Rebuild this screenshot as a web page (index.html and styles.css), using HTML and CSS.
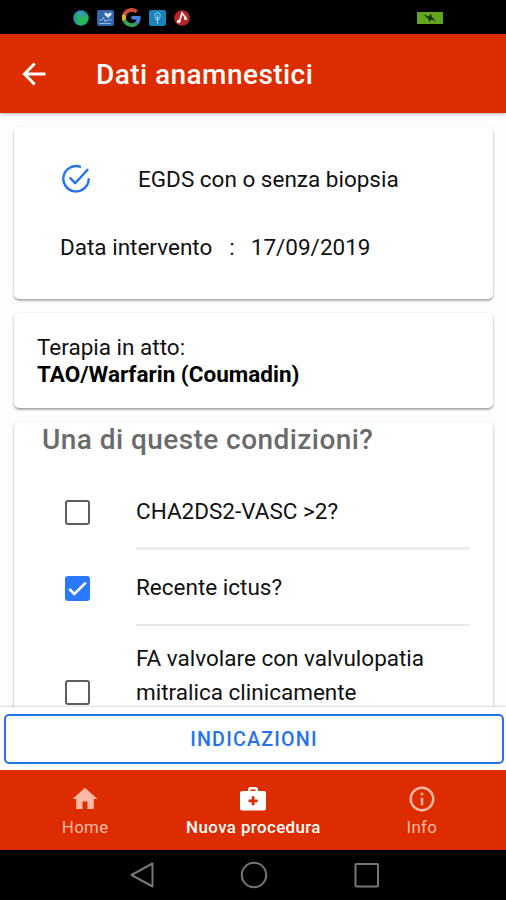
FILE: index.html
```html
<!DOCTYPE html>
<html lang="it">
<head>
<meta charset="utf-8">
<title>Dati anamnestici</title>
<link rel="stylesheet" href="styles.css">
</head>
<body>
<div class="screen">
  <div class="status">
    <div class="status-icons">
      <svg width="16" height="16" viewBox="0 0 16 16"><circle cx="8" cy="8" r="7.8" fill="#2593a5"/><path d="M1 4 5 5 9 8 14 4 15.5 8 13 13 8 15.5 3 13 5 9Z" fill="#23b955"/><path d="M5 1 10 2 12 5 9 8 5 5Z" fill="#399cae"/></svg>
      <svg width="17" height="16" viewBox="0 0 17 16"><rect width="17" height="16" rx="2" fill="#3267a9"/><path d="M11 8 7.5 4.7Q7 2.5 9 2.5L11 4 13 2.5Q15 2.5 14.5 4.7Z" fill="#dce8f5"/><path d="M2 10H5L6.500 7 8 12 10 10H15M2 13.500H14" fill="none" stroke="#8fb4dd" stroke-width="1"/></svg>
      <svg width="19" height="19" viewBox="0 0 48 48"><path fill="#d94a3d" d="M24 9.500c3.500 0 6.700 1.200 9.200 3.600l6.900-6.900C35.900 2.400 30.500 0 24 0 14.600 0 6.500 5.400 2.600 13.200l8 6.200C12.400 13.700 17.700 9.500 24 9.500z"/><path fill="#4a80dd" d="M47 24.500c0-1.600-.2-3.100-.4-4.500H24v9h12.900c-.6 3-2.200 5.500-4.700 7.200l7.700 6C44.400 38 47 31.800 47 24.500z"/><path fill="#e6b423" d="M10.500 28.600a14.500 14.500 0 0 1 0-9.200l-8-6.200a24 24 0 0 0 0 21.600z"/><path fill="#38a057" d="M24 48c6.500 0 11.900-2.100 15.900-5.800l-7.700-6c-2.200 1.500-4.900 2.300-8.200 2.300-6.300 0-11.600-4.200-13.500-9.900l-8 6.200C6.500 42.600 14.600 48 24 48z"/></svg>
      <svg width="17" height="16" viewBox="0 0 17 16"><rect width="17" height="16" rx="2" fill="#1b83b7"/><circle cx="8.500" cy="5.500" r="2.800" fill="none" stroke="#8bd0ec"/><path d="M8.500 5V14M6 8.500 8.500 10.500 11 8.500" fill="none" stroke="#8bd0ec"/></svg>
      <svg width="16" height="16" viewBox="0 0 16 16"><circle cx="8" cy="8" r="7.800" fill="#b5262c"/><path d="M5.500 11.500 8 3 11.500 7.500" fill="none" stroke="#fff" stroke-width="1.600"/><circle cx="4.700" cy="11.500" r="1.800" fill="#fff"/><circle cx="11.500" cy="8.500" r="1.500" fill="#fff"/></svg>
    </div>
    <svg width="26" height="12" viewBox="0 0 26 12"><rect width="26" height="12" fill="#62a51e"/><path d="M6 2.500 12 4.500 14 2 15 5 19.500 9.500 14.500 7.500 12.500 10 11 6.500Z" fill="#173607"/></svg>
  </div>

  <header class="header">
    <svg class="back" width="24" height="24" viewBox="0 0 24 24"><path d="M23.500 12H2.500M12.700 1.500 2.500 12 12.700 22.500" fill="none" stroke="#fff" stroke-width="3"/></svg>
    <h1>Dati anamnestici</h1>
  </header>

  <main class="content">
    <section class="card procedure">
      <div class="procedure-name">
        <svg width="30" height="30" viewBox="0 0 30 30" fill="none" stroke="#2374e8" stroke-width="2.400" stroke-linecap="round" stroke-linejoin="round"><path d="M19 2.700A12.700 12.700 0 1 0 27.700 15.200"/><path d="M9.200 14.200 14.200 19.200 26.500 5.800"/></svg>
        <span>EGDS con o senza biopsia</span>
      </div>
      <div class="date"><span>Data intervento</span><span class="colon">:</span><span class="date-value">17/09/2019</span></div>
    </section>

    <section class="card therapy">
      <div>Terapia in atto:</div>
      <strong>TAO/Warfarin (Coumadin)</strong>
    </section>

    <section class="card conditions">
      <h2>Una di queste condizioni?</h2>
      <div class="item">
        <span class="box"></span>
        <div class="label thick">CHA2DS2-VASC &gt;2?</div>
      </div>
      <div class="item">
        <span class="box checked"><svg width="25" height="25" viewBox="0 0 25 25"><path d="M4.300 13 9.300 18 20.800 6.600" fill="none" stroke="#fff" stroke-width="2.600"/></svg></span>
        <div class="label">Recente ictus?</div>
      </div>
      <div class="item tall">
        <span class="box"></span>
        <div class="label">FA valvolare con valvulopatia<br>mitralica clinicamente</div>
      </div>
    </section>
  </main>

  <footer class="footer"><button class="action">INDICAZIONI</button></footer>

  <nav class="tabs">
    <div class="tab">
      <svg width="30" height="30" viewBox="0 0 24 24"><path d="M10 20v-6h4v6h5v-8h3L12 3 2 12h3v8z" fill="currentColor"/></svg>
      <span>Home</span>
    </div>
    <div class="tab active">
      <svg width="30" height="30" viewBox="0 0 30 30"><path fill="currentColor" fill-rule="evenodd" d="M10 7V5.500Q10 3 12.500 3H17.500Q20 3 20 5.500V7H26Q28 7 28 9V24.500Q28 26.500 26 26.500H4Q2 26.500 2 24.500V9Q2 7 4 7ZM12.400 7H17.600V5.400H12.400ZM13.700 12.300V15.400H10.500V18.200H13.700V21.300H16.500V18.200H19.700V15.400H16.500V12.300Z"/></svg>
      <span>Nuova procedura</span>
    </div>
    <div class="tab">
      <svg width="30" height="30" viewBox="0 0 24 24"><path d="M11 7h2v2h-2zm0 4h2v6h-2zm1-9C6.480 2 2 6.480 2 12s4.480 10 10 10 10-4.480 10-10S17.520 2 12 2zm0 18c-4.410 0-8-3.590-8-8s3.590-8 8-8 8 3.590 8 8-3.590 8-8 8z" fill="currentColor"/></svg>
      <span>Info</span>
    </div>
  </nav>

  <div class="system">
    <svg width="28" height="28" viewBox="0 0 28 28"><path d="M25.500 2.500V25.500L4.500 14Z"/></svg>
    <svg width="28" height="28" viewBox="0 0 28 28"><circle cx="14" cy="14" r="12.200"/></svg>
    <svg width="28" height="28" viewBox="0 0 28 28"><rect x="2.500" y="3" width="22.500" height="22.500" rx="1"/></svg>
  </div>
</div>
</body>
</html>
```
FILE: styles.css
```css
* { box-sizing: border-box; }
body { margin: 0; font-family: Roboto, sans-serif; background: #000; }
svg { display: block; flex: none; }
.screen {
  width: 506px;
  height: 900px;
  display: flex;
  flex-direction: column;
  overflow: hidden;
  background: #fff;
  color: #111;
  font-size: 22.5px;
  line-height: 27px;
  white-space: nowrap;
}
.status {
  height: 34px;
  flex: none;
  display: flex;
  align-items: center;
  justify-content: space-between;
  padding: 1px 63px 0 73px;
  background: #000;
}
.status-icons { display: flex; align-items: center; gap: 8px; }
.header {
  height: 79px;
  flex: none;
  display: flex;
  align-items: center;
  padding: 1px 0 0 22px;
  background: #dd2c00;
  color: #fff;
  position: relative;
  box-shadow: 0 1px 3px rgba(0, 0, 0, .3);
}
.header h1 {
  margin: 0 0 0 50px;
  font-size: 28px;
  font-weight: 500;
  letter-spacing: .44px;
}
.content {
  flex: 1;
  min-height: 0;
  overflow: hidden;
  display: flex;
  flex-direction: column;
  gap: 14px;
  padding: 14px 13px 0 14px;
  background: #fdfdfd;
}
.card {
  flex: none;
  background: #fff;
  border-radius: 5px;
  box-shadow: 0 2px 2px rgba(0, 0, 0, .22), 0 1px 3px rgba(0, 0, 0, .2);
}
.procedure { height: 172px; padding: 36px 0 0 47px; }
.procedure-name {
  display: flex;
  align-items: center;
  gap: 47px;
  height: 32px;
}
.date { display: flex; margin: 39px 0 0 -1px; }
.colon { margin-left: 17px; }
.date-value { margin-left: 16px; }
.therapy { height: 95px; padding: 21px 0 0 23px; }
.therapy strong { display: block; font-weight: 700; color: #000; }
.conditions { height: 340px; }
.conditions h2 {
  margin: 0 0 0 28px;
  padding-top: 1px;
  height: 52px;
  font-size: 28px;
  line-height: 34px;
  font-weight: 500;
  letter-spacing: .44px;
  color: #6b6b6b;
}
.item { height: 76px; display: flex; align-items: center; padding: 0 23px 0 51px; }
.item.tall { height: 132px; }
.box {
  width: 25px;
  height: 25px;
  flex: none;
  margin-right: 46px;
  border: 2px solid #5e5e5e;
  border-radius: 3px;
}
.box.checked { border: 0; background: #2979ff; }
.label {
  flex: 1;
  height: 100%;
  display: flex;
  align-items: center;
  border-bottom: 2px solid #e8e8e8;
  line-height: 34px;
}
.label.thick { border-bottom: 3px solid #ececec; }
.tall .label { display: block; padding-top: 15px; }
.footer {
  height: 63px;
  flex: none;
  padding: 7px 2px 6px 4px;
  background: #fff;
  box-shadow: 0 -1px 2px rgba(0, 0, 0, .15);
  position: relative;
}
.action {
  width: 100%;
  height: 50px;
  padding: 0;
  border: 2px solid #2374e8;
  border-radius: 5px;
  background: #fff;
  color: #2374e8;
  font: 500 19.7px Roboto, sans-serif;
  letter-spacing: 1.2px;
}
.tabs { height: 80px; flex: none; display: flex; padding-left: 1px; background: #dd2c00; position: relative; }
.tab {
  flex: 1;
  display: flex;
  flex-direction: column;
  align-items: center;
  padding-top: 14px;
  color: #ffb9a6;
  font-size: 16.9px;
  line-height: 26px;
  letter-spacing: .3px;
}
.tab.active { color: #fff; font-weight: 500; letter-spacing: .4px; }
.system {
  height: 50px;
  flex: none;
  display: flex;
  justify-content: center;
  align-items: center;
  gap: 85px;
  padding-left: 1px;
  background: #000;
}
.system svg { fill: none; stroke: #777; stroke-width: 2; stroke-linejoin: round; }
```
